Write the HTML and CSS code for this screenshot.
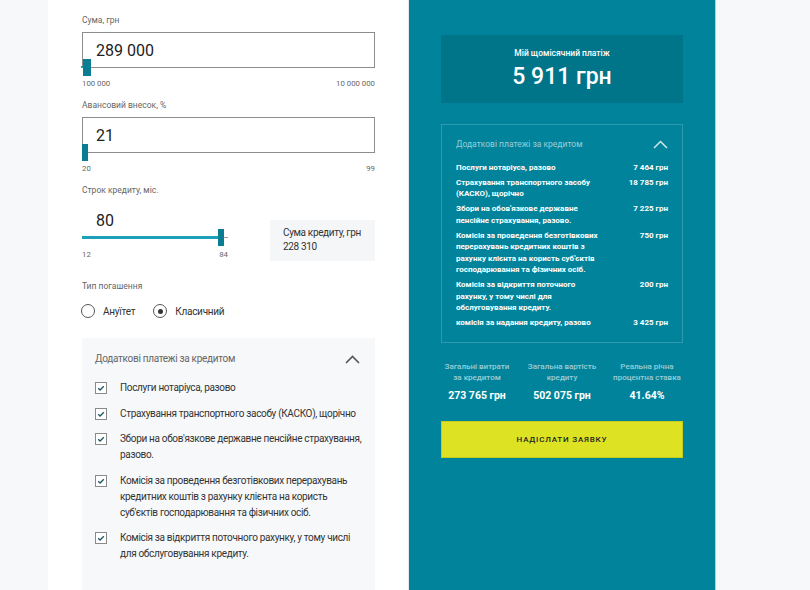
FILE: index.html
```html
<!DOCTYPE html>
<html lang="uk">
<head>
<meta charset="utf-8">
<title>Кредитний калькулятор</title>
<link rel="stylesheet" href="styles.css">
</head>
<body>
<div class="page">
  <div class="gutter"></div>
  <main class="form-col">
    <div class="form-inner">
      <div class="field">
        <div class="label">Сума, грн</div>
        <div class="input-box"><span>289 000</span><span class="track-stub"></span><span class="thumb thumb-wide"></span></div>
        <div class="range-labels"><span>100 000</span><span>10 000 000</span></div>
      </div>
      <div class="field">
        <div class="label">Авансовий внесок, %</div>
        <div class="input-box"><span>21</span><span class="thumb thumb-narrow"></span></div>
        <div class="range-labels"><span>20</span><span>99</span></div>
      </div>
      <div class="label label-term">Строк кредиту, міс.</div>
      <div class="term-row">
        <div class="term-slider">
          <div class="term-value">80</div>
          <div class="slider">
            <span class="slider-fill"></span>
            <span class="slider-rest"></span>
            <span class="thumb thumb-term"></span>
          </div>
          <div class="range-labels term-labels"><span>12</span><span>84</span></div>
        </div>
        <div class="credit-sum">
          <div>Сума кредиту, грн</div>
          <div>228 310</div>
        </div>
      </div>
      <div class="label label-type">Тип погашення</div>
      <div class="radios">
        <label class="radio"><span class="radio-circle"></span>Ануїтет</label>
        <label class="radio"><span class="radio-circle checked"></span>Класичний</label>
      </div>
      <section class="extras">
        <div class="extras-head">
          <span>Додаткові платежі за кредитом</span>
          <svg class="chev" width="15" height="9" viewBox="0 0 15 9"><path d="M1 8 L7.5 1.5 L14 8" fill="none" stroke="#555" stroke-width="1.6"/></svg>
        </div>
        <ul class="checks">
          <li><span class="cb"><svg width="10" height="10" viewBox="0 0 10 10"><path d="M2.2 5.2 L4.1 7 L7.8 3.2" fill="none" stroke="#1d5864" stroke-width="1.3"/></svg></span><span>Послуги нотаріуса, разово</span></li>
          <li><span class="cb"><svg width="10" height="10" viewBox="0 0 10 10"><path d="M2.2 5.2 L4.1 7 L7.8 3.2" fill="none" stroke="#1d5864" stroke-width="1.3"/></svg></span><span>Страхування транспортного засобу (КАСКО), щорічно</span></li>
          <li><span class="cb"><svg width="10" height="10" viewBox="0 0 10 10"><path d="M2.2 5.2 L4.1 7 L7.8 3.2" fill="none" stroke="#1d5864" stroke-width="1.3"/></svg></span><span>Збори на обов'язкове державне пенсійне страхування, разово.</span></li>
          <li><span class="cb"><svg width="10" height="10" viewBox="0 0 10 10"><path d="M2.2 5.2 L4.1 7 L7.8 3.2" fill="none" stroke="#1d5864" stroke-width="1.3"/></svg></span><span>Комісія за проведення безготівкових перерахувань кредитних коштів з рахунку клієнта на користь суб'єктів господарювання та фізичних осіб.</span></li>
          <li><span class="cb"><svg width="10" height="10" viewBox="0 0 10 10"><path d="M2.2 5.2 L4.1 7 L7.8 3.2" fill="none" stroke="#1d5864" stroke-width="1.3"/></svg></span><span>Комісія за відкриття поточного рахунку, у тому числі для обслуговування кредиту.</span></li>
        </ul>
      </section>
    </div>
  </main>
  <aside class="result-col">
    <div class="result-inner">
      <div class="monthly">
        <div class="monthly-title">Мій щомісячний платіж</div>
        <div class="monthly-value">5 911 грн</div>
      </div>
      <div class="fees">
        <div class="fees-head">
          <span>Додаткові платежі за кредитом</span>
          <svg class="chev" width="15" height="9" viewBox="0 0 15 9"><path d="M1 8 L7.5 1.5 L14 8" fill="none" stroke="#d2e6ea" stroke-width="1.5"/></svg>
        </div>
        <div class="fee"><span class="fee-name">Послуги нотаріуса, разово</span><span class="fee-sum">7 464 грн</span></div>
        <div class="fee"><span class="fee-name">Страхування транспортного засобу (КАСКО), щорічно</span><span class="fee-sum">18 785 грн</span></div>
        <div class="fee"><span class="fee-name">Збори на обов'язкове державне пенсійне страхування, разово.</span><span class="fee-sum">7 225 грн</span></div>
        <div class="fee"><span class="fee-name">Комісія за проведення безготівкових перерахувань кредитних коштів з рахунку клієнта на користь суб'єктів господарювання та фізичних осіб.</span><span class="fee-sum">750 грн</span></div>
        <div class="fee"><span class="fee-name">Комісія за відкриття поточного рахунку, у тому числі для обслуговування кредиту.</span><span class="fee-sum">200 грн</span></div>
        <div class="fee"><span class="fee-name fee-wide">комісія за надання кредиту, разово</span><span class="fee-sum">3 425 грн</span></div>
      </div>
      <div class="stats">
        <div class="stat"><div class="stat-label">Загальні витрати за кредитом</div><div class="stat-value">273 765 грн</div></div>
        <div class="stat"><div class="stat-label">Загальна вартість кредиту</div><div class="stat-value">502 075 грн</div></div>
        <div class="stat"><div class="stat-label">Реальна річна процентна ставка</div><div class="stat-value">41.64%</div></div>
      </div>
      <button class="submit">НАДІСЛАТИ ЗАЯВКУ</button>
    </div>
  </aside>
  <div class="rest"></div>
</div>
</body>
</html>
```

FILE: styles.css
```css
* { box-sizing: border-box; margin: 0; padding: 0; }
html, body { height: 100%; }
body {
  background: #f7f8fa;
  font-family: Roboto, "Liberation Sans", Arial, sans-serif;
  color: #333;
  overflow: hidden;
}
.page { display: flex; height: 590px; }
.gutter { width: 48px; flex: none; }
.rest { flex: 1; }

/* left column */
.form-col {
  width: 361px;
  flex: none;
  background: #fff;
  border-right: 1px solid #e6e8eb;
  padding: 14px 0 0 34px;
}
.form-inner { width: 293px; }
.field { margin-bottom: 9px; }
.label { font-size: 8.5px; line-height: 12px; color: #666; }
.input-box {
  position: relative;
  height: 36px;
  margin-top: 6px;
  border: 1px solid #8d8d8d;
  padding-left: 13px;
  display: flex;
  align-items: center;
  font-size: 16px;
  color: #222;
}
.thumb { position: absolute; background: #0a7d93; }
.thumb-wide { width: 8px; height: 17px; left: 0; bottom: -9px; }
.thumb-narrow { width: 6px; height: 17px; left: -1px; bottom: -9px; }
.track-stub { position: absolute; left: -2px; bottom: -1px; width: 3px; height: 2px; background: #1ba0b8; }
.range-labels {
  display: flex;
  justify-content: space-between;
  margin-top: 10px;
  font-size: 7.8px;
  line-height: 12px;
  color: #666;
}

.term-row { display: flex; justify-content: space-between; align-items: flex-start; }
.term-slider { width: 146px; }
.term-value { margin-top: 15px; padding-left: 14px; font-size: 16px; line-height: 20px; color: #222; }
.slider { position: relative; height: 17px; margin-top: -2px; }
.slider-fill { position: absolute; left: 0; top: 7px; width: 137px; height: 3px; background: #1ba0b8; }
.slider-rest { position: absolute; left: 140px; top: 8px; width: 6px; height: 1px; background: #999; }
.thumb-term { left: 136px; top: 0; width: 6px; height: 17px; }
.term-labels { margin-top: 3px; }
.credit-sum {
  margin-top: 24px;
  width: 105px;
  height: 41px;
  background: #f5f6f8;
  padding: 6px 0 0 13px;
  font-size: 10px;
  letter-spacing: -0.35px;
  line-height: 14px;
  color: #333;
}

.label-term { margin-top: 0; }
.label-type { margin-top: 19px; }
.radios { display: flex; gap: 19px; margin-top: 11px; height: 16px; align-items: center; }
.radio { display: flex; align-items: center; gap: 8px; font-size: 10px; letter-spacing: -0.25px; color: #333; }
.radio-circle {
  width: 14px; height: 14px;
  border: 1px solid #555;
  border-radius: 50%;
  display: flex; align-items: center; justify-content: center;
  margin-left: -1px;
}
.radio-circle.checked::after {
  content: "";
  width: 5px; height: 5px;
  border-radius: 50%;
  background: #333;
}

.extras {
  margin-top: 19px;
  background: #f7f8fa;
  padding: 13px 10px 30px 13px;
  height: 260px;
}
.extras-head {
  display: flex; justify-content: space-between; align-items: center;
  font-size: 10px; letter-spacing: -0.3px; line-height: 16px; color: #666;
}
.extras-head .chev { margin-right: 5px; }
.checks { list-style: none; margin-top: 13px; }
.checks li {
  display: flex; gap: 13px;
  font-size: 10px; letter-spacing: -0.33px; line-height: 16px;
  color: #333; margin-bottom: 9.6px;
}
.cb {
  flex: none;
  width: 12px; height: 12px;
  margin-top: 2px;
  border: 1px solid #8a8a8a;
  background: #fff;
  display: flex; align-items: center; justify-content: center;
}

/* right column */
.result-col {
  width: 307px;
  flex: none;
  background: #01849b;
  border-right: 1px solid #a9d2da;
  padding: 35px 0 0 32px;
}
.result-inner { width: 242px; }
.monthly {
  height: 68px;
  background: #00758a;
  padding-top: 12px;
  text-align: center;
  color: #fff;
}
.monthly-title { font-size: 8.5px; line-height: 12px; font-weight: 500; }
.monthly-value { margin-top: 4px; font-size: 23px; line-height: 28px; font-weight: 500; }

.fees {
  margin-top: 21px;
  border: 1px solid rgba(255,255,255,0.18);
  padding: 12px 14px 13px 14px;
  color: #fff;
}
.fees-head {
  display: flex; justify-content: space-between; align-items: center;
  font-size: 8.5px; line-height: 14px; color: rgba(255,255,255,0.6);
  margin-bottom: 11px;
}
.fee {
  display: flex; justify-content: space-between; align-items: flex-start;
  font-size: 8px; line-height: 11.6px; font-weight: 700;
  margin-bottom: 3.2px;
}
.fee:last-child { margin-bottom: 0; }
.fee-name { width: 142px; }
.fee-wide { width: 160px; }
.fee-sum { white-space: nowrap; }

.stats {
  margin-top: 18px;
  display: grid;
  grid-template-columns: repeat(3, 72px);
  column-gap: 13px;
  text-align: center;
}
.stat-label { font-size: 8px; line-height: 11.5px; font-weight: 500; color: rgba(255,255,255,0.6); }
.stat-value { margin-top: 5px; font-size: 10.5px; line-height: 13px; font-weight: 700; color: #fff; }

.submit {
  display: block;
  margin-top: 19px;
  width: 242px;
  height: 37px;
  background: #dde322;
  border: 1px solid #c6cb1c;
  font-family: Roboto, "Liberation Sans", Arial, sans-serif;
  font-size: 8px;
  font-weight: 500;
  letter-spacing: 0.8px;
  color: #222;
}
```
